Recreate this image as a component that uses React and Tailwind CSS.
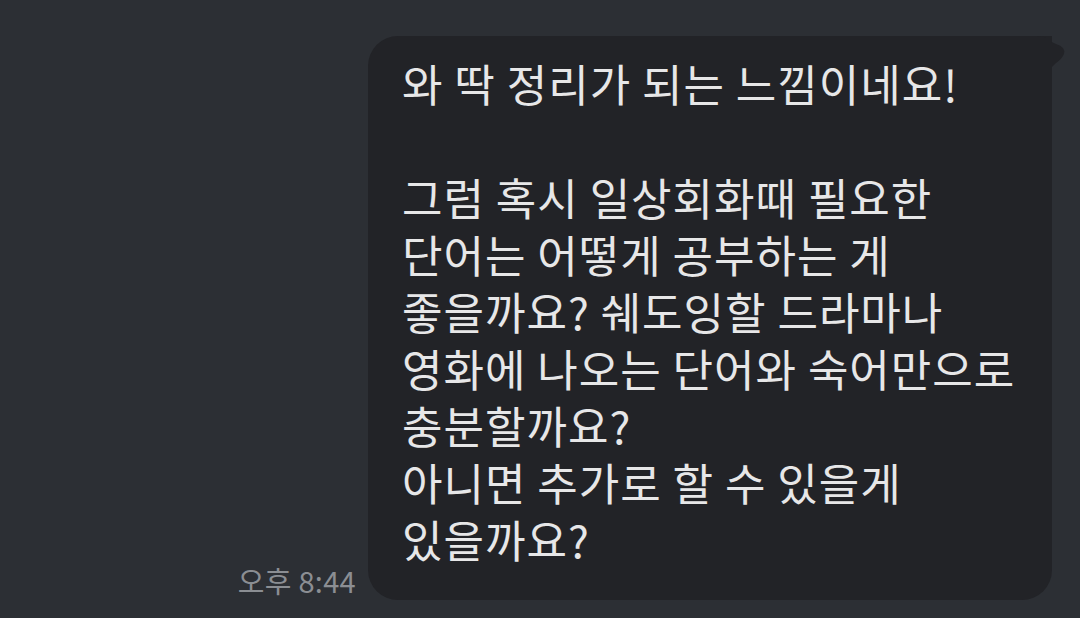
const lines = [
  '와 딱 정리가 되는 느낌이네요!',
  '',
  '그럼 혹시 일상회화때 필요한',
  '단어는 어떻게 공부하는 게',
  '좋을까요? 쉐도잉할 드라마나',
  '영화에 나오는 단어와 숙어만으로',
  '충분할까요?',
  '아니면 추가로 할 수 있을게',
  '있을까요?',
];

export default function App() {
  return (
    <div
      className="w-[1080px] h-[618px] bg-[#2c2f34] overflow-hidden flex justify-end items-start pt-[36px] pr-[28px]"
      style={{ fontFamily: '"Noto Sans CJK KR", "Noto Sans", sans-serif' }}
    >
      <div className="flex items-end gap-[12px]">
        <span className="text-[29px] leading-none text-[#8b8e93] mb-[5px] tracking-[0.3px]">오후 8:44</span>
        <div className="relative w-[684px] h-[564px] bg-[#222327] rounded-[30px] rounded-tr-none pl-[34px] pt-[19px]">
          {/* tail */}
          <svg className="absolute -top-[1px] -right-[14px]" width="40" height="32" viewBox="0 0 40 32">
            <path d="M0 1 L10 1 Q18 1 22 4 Q25 7 30 9 Q40 12 38 19 Q36 24 30 28 L26 32 L0 32 Z" fill="#222327" />
          </svg>
          <div className="text-[44px] leading-[57px] text-[#e7e7e8] tracking-[1px]">
            {lines.map((l, i) => (
              <div key={i} className="whitespace-nowrap h-[57px]">{l}</div>
            ))}
          </div>
        </div>
      </div>
    </div>
  );
}
